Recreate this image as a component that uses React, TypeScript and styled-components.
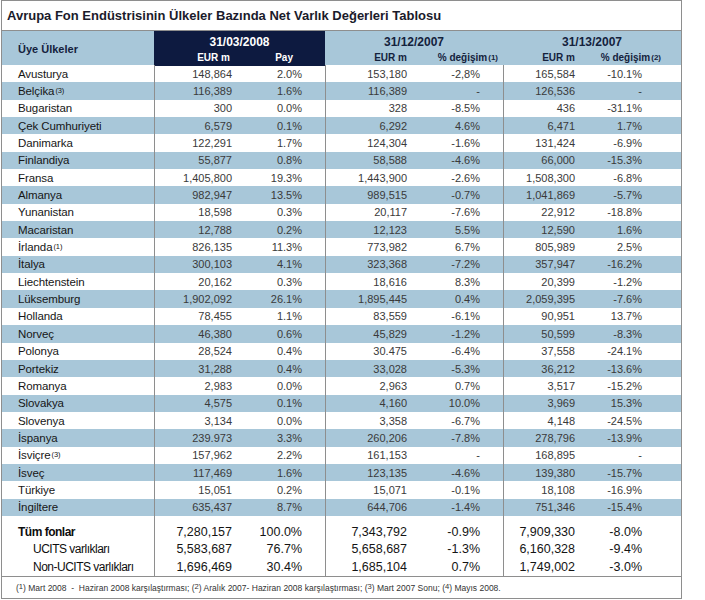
import React from 'react';
import styled, { createGlobalStyle } from 'styled-components';

const GlobalStyle = createGlobalStyle`
  html, body { margin: 0; padding: 0; background: #fff; }
  body { font-family: "Liberation Sans", Arial, sans-serif; }
`;

const COLS = '152px 79px 92px 84px 94px 74px 104px';
const BLUE = '#a8c7d9';
const NAVY = '#0d1a40';
const LINE = '#8e8e8e';

const Frame = styled.div`
  box-sizing: border-box;
  width: 681px;
  margin-left: 1px;
  border: 1px solid ${LINE};
  background: #fff;
`;

const Title = styled.div`
  height: 29px;
  display: flex;
  align-items: center;
  padding-left: 5px;
  font-size: 13px;
  font-weight: 700;
  color: #1b1b2b;
  border-bottom: 1px solid ${LINE};
`;

const HeaderBar = styled.div`
  display: grid;
  grid-template-columns: 152px 171px 178px 178px;
  height: 34px;
  background: ${BLUE};
  color: #14223d;
`;

const HeadName = styled.div`
  display: flex;
  align-items: center;
  padding-left: 16px;
  font-size: 11px;
  font-weight: 700;
`;

const HeadGroup = styled.div<{ $dark?: boolean }>`
  display: flex;
  flex-direction: column;
  background: ${(p) => (p.$dark ? NAVY : 'transparent')};
  color: ${(p) => (p.$dark ? '#fff' : '#14223d')};
`;

const HeadDate = styled.div`
  padding-top: 4px;
  line-height: 15px;
  text-align: center;
  font-size: 12px;
  font-weight: 700;
`;

const HeadSub = styled.div<{ $cols: string }>`
  display: grid;
  grid-template-columns: ${(p) => p.$cols};
  line-height: 15px;
  font-size: 10px;
  font-weight: 700;
`;

const HeadLabel = styled.div<{ $pr: number }>`
  text-align: right;
  padding-right: ${(p) => p.$pr}px;
`;

const LabelNote = styled.span`
  font-size: 0.8em;
  position: relative;
  top: -1px;
  margin-left: 1px;
`;

const Sup = styled.sup`
  font-size: 0.65em;
  vertical-align: 0.45em;
  line-height: 0;
  margin-left: 1px;
`;

const Row = styled.div<{ $alt?: boolean; $h: number }>`
  display: grid;
  grid-template-columns: ${COLS};
  height: ${(p) => p.$h}px;
  background: ${(p) => (p.$alt ? BLUE : '#fff')};
`;

const NameCell = styled.div<{ $indent?: number; $bold?: boolean; $total?: boolean }>`
  display: flex;
  align-items: center;
  padding-left: ${(p) => p.$indent ?? 16}px;
  font-size: ${(p) => (p.$total ? 12 : 11.5)}px;
  font-weight: ${(p) => (p.$bold ? 700 : 400)};
  letter-spacing: ${(p) => (p.$total ? -0.5 : -0.1)}px;
  color: ${(p) => (p.$total ? '#0e0e0e' : '#161616')};
  white-space: nowrap;
`;

const Cell = styled.div<{ $pr: number; $div?: boolean; $total?: boolean }>`
  box-sizing: border-box;
  display: flex;
  align-items: center;
  justify-content: flex-end;
  padding-right: ${(p) => p.$pr}px;
  border-left: ${(p) => (p.$div ? `1px solid ${LINE}` : 'none')};
  font-size: ${(p) => (p.$total ? 12.5 : 11)}px;
  color: ${(p) => (p.$total ? '#141414' : '#3a3a3a')};
  white-space: nowrap;
`;

const Footer = styled.div`
  border-top: 1px solid ${LINE};
  height: 21px;
  display: flex;
  align-items: center;
  padding-left: 14px;
  font-size: 8.5px;
  color: #333;
  white-space: pre;
`;

const Note = styled.span`
  font-size: 0.9em;
  position: relative;
  top: -1px;
`;

const SPEC = [
  { pr: 1, div: true },
  { pr: 23 },
  { pr: 2, div: true },
  { pr: 23 },
  { pr: 2, div: true },
  { pr: 39 },
];

type RowData = [string, string | null, string[]];

const ROWS: RowData[] = [
  ['Avusturya', null, ['148,864', '2.0%', '153,180', '-2,8%', '165,584', '-10.1%']],
  ['Belçika', ' (3)', ['116,389', '1.6%', '116,389', '-', '126,536', '-']],
  ['Bugaristan', null, ['300', '0.0%', '328', '-8.5%', '436', '-31.1%']],
  ['Çek Cumhuriyeti', null, ['6,579', '0.1%', '6,292', '4.6%', '6,471', '1.7%']],
  ['Danimarka', null, ['122,291', '1.7%', '124,304', '-1.6%', '131,424', '-6.9%']],
  ['Finlandiya', null, ['55,877', '0.8%', '58,588', '-4.6%', '66,000', '-15.3%']],
  ['Fransa', null, ['1,405,800', '19.3%', '1,443,900', '-2.6%', '1,508,300', '-6.8%']],
  ['Almanya', null, ['982,947', '13.5%', '989,515', '-0.7%', '1,041,869', '-5.7%']],
  ['Yunanistan', null, ['18,598', '0.3%', '20,117', '-7.6%', '22,912', '-18.8%']],
  ['Macaristan', null, ['12,788', '0.2%', '12,123', '5.5%', '12,590', '1.6%']],
  ['İrlanda', '(1)', ['826,135', '11.3%', '773,982', '6.7%', '805,989', '2.5%']],
  ['İtalya', null, ['300,103', '4.1%', '323,368', '-7.2%', '357,947', '-16.2%']],
  ['Liechtenstein', null, ['20,162', '0.3%', '18,616', '8.3%', '20,399', '-1.2%']],
  ['Lüksemburg', null, ['1,902,092', '26.1%', '1,895,445', '0.4%', '2,059,395', '-7.6%']],
  ['Hollanda', null, ['78,455', '1.1%', '83,559', '-6.1%', '90,951', '13.7%']],
  ['Norveç', null, ['46,380', '0.6%', '45,829', '-1.2%', '50,599', '-8.3%']],
  ['Polonya', null, ['28,524', '0.4%', '30.475', '-6.4%', '37,558', '-24.1%']],
  ['Portekiz', null, ['31,288', '0.4%', '33,028', '-5.3%', '36,212', '-13.6%']],
  ['Romanya', null, ['2,983', '0.0%', '2,963', '0.7%', '3,517', '-15.2%']],
  ['Slovakya', null, ['4,575', '0.1%', '4,160', '10.0%', '3,969', '15.3%']],
  ['Slovenya', null, ['3,134', '0.0%', '3,358', '-6.7%', '4,148', '-24.5%']],
  ['İspanya', null, ['239.973', '3.3%', '260,206', '-7.8%', '278,796', '-13.9%']],
  ['İsviçre', '(3)', ['157,962', '2.2%', '161,153', '-', '168,895', '-']],
  ['İsveç', null, ['117,469', '1.6%', '123,135', '-4.6%', '139,380', '-15.7%']],
  ['Türkiye', null, ['15,051', '0.2%', '15,071', '-0.1%', '18,108', '-16.9%']],
  ['İngiltere', null, ['635,437', '8.7%', '644,706', '-1.4%', '751,346', '-15.4%']],
];

const TOTALS: { name: string; indent: number; bold: boolean; vals: string[] }[] = [
  { name: 'Tüm fonlar', indent: 16, bold: true, vals: ['7,280,157', '100.0%', '7,343,792', '-0.9%', '7,909,330', '-8.0%'] },
  { name: 'UCITS varlıkları', indent: 31, bold: false, vals: ['5,583,687', '76.7%', '5,658,687', '-1.3%', '6,160,328', '-9.4%'] },
  { name: 'Non-UCITS varlıkları', indent: 31, bold: false, vals: ['1,696,469', '30.4%', '1,685,104', '0.7%', '1,749,002', '-3.0%'] },
];

const Cells: React.FC<{ vals: string[]; total?: boolean }> = ({ vals, total }) => (
  <>
    {SPEC.map((s, i) => (
      <Cell key={i} $pr={s.pr} $div={s.div} $total={total}>
        {vals[i]}
      </Cell>
    ))}
  </>
);

export default function App() {
  return (
    <>
      <GlobalStyle />
      <Frame>
        <Title>Avrupa Fon Endüstrisinin Ülkeler Bazında Net Varlık Değerleri Tablosu</Title>
        <HeaderBar>
          <HeadName>Üye Ülkeler</HeadName>
          <HeadGroup $dark>
            <HeadDate>31/03/2008</HeadDate>
            <HeadSub $cols="79px 92px">
              <HeadLabel $pr={3}>EUR m</HeadLabel>
              <HeadLabel $pr={32}>Pay</HeadLabel>
            </HeadSub>
          </HeadGroup>
          <HeadGroup>
            <HeadDate>31/12/2007</HeadDate>
            <HeadSub $cols="84px 94px">
              <HeadLabel $pr={2}>EUR m</HeadLabel>
              <HeadLabel $pr={5}>
                % değişim<LabelNote>(1)</LabelNote>
              </HeadLabel>
            </HeadSub>
          </HeadGroup>
          <HeadGroup>
            <HeadDate>31/13/2007</HeadDate>
            <HeadSub $cols="74px 104px">
              <HeadLabel $pr={2}>EUR m</HeadLabel>
              <HeadLabel $pr={20}>
                % değişim<LabelNote>(2)</LabelNote>
              </HeadLabel>
            </HeadSub>
          </HeadGroup>
        </HeaderBar>
        {ROWS.map(([name, note, vals], i) => (
          <Row key={name} $alt={i % 2 === 1} $h={17.35}>
            <NameCell>
              {name}
              {note && <Sup>{note}</Sup>}
            </NameCell>
            <Cells vals={vals} />
          </Row>
        ))}
        <Row $h={7}>
          <NameCell />
          <Cells vals={['', '', '', '', '', '']} />
        </Row>
        {TOTALS.map((t) => (
          <Row key={t.name} $h={17.7}>
            <NameCell $indent={t.indent} $bold={t.bold} $total>
              {t.name}
            </NameCell>
            <Cells vals={t.vals} total />
          </Row>
        ))}
        <Footer>
          (<Note>1</Note>) Mart 2008  -  Haziran 2008 karşılaştırması; (<Note>2</Note>) Aralık 2007- Haziran 2008 karşılaştırması; (<Note>3</Note>) Mart 2007 Sonu; (<Note>4</Note>) Mayıs 2008.
        </Footer>
      </Frame>
    </>
  );
}
